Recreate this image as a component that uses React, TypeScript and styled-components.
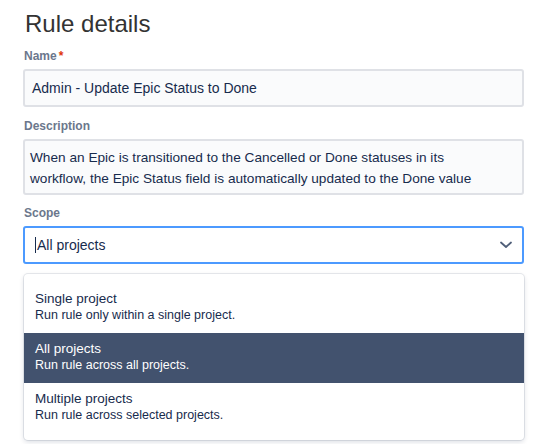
import React from "react";
import styled, { createGlobalStyle } from "styled-components";

const GlobalStyle = createGlobalStyle`
  html, body { margin: 0; padding: 0; background: #ffffff; }
  body { font-family: "Liberation Sans", Arial, Helvetica, sans-serif; }
  * { box-sizing: border-box; }
`;

const Page = styled.div`
  width: 537px;
  height: 444px;
  overflow: hidden;
  padding: 10px 13px 0 23px;
  display: flex;
  flex-direction: column;
`;

const Title = styled.h1`
  margin: 0;
  font-size: 24px;
  line-height: 28px;
  font-weight: 400;
  color: #333333;
  padding-left: 2px;
`;

const Field = styled.div<{ $top: number }>`
  display: flex;
  flex-direction: column;
  margin-top: ${(p) => p.$top}px;
`;

const Label = styled.label`
  font-size: 12px;
  line-height: 16px;
  font-weight: 700;
  color: #6b778c;
  margin-bottom: 5px;
  padding-left: 1px;
`;

const Required = styled.span`
  color: #de350b;
  margin-left: 2px;
`;

const TextBox = styled.div`
  border: 2px solid #dfe1e6;
  background: #fafbfc;
  border-radius: 3px;
  font-size: 14px;
  color: #172b4d;
`;

const SingleLine = styled(TextBox)`
  height: 38px;
  display: flex;
  align-items: center;
  padding: 0 7px;
`;

const MultiLine = styled(TextBox)`
  height: 56px;
  padding: 6px 6px 0 5px;
  font-size: 13.65px;
  line-height: 21px;
`;

const Select = styled.div`
  height: 38px;
  border: 2px solid #4c9aff;
  background: #ffffff;
  border-radius: 3px;
  display: flex;
  align-items: center;
  padding: 0 9px 0 10px;
  font-size: 14px;
  color: #172b4d;
`;

const Caret = styled.span`
  width: 1px;
  height: 16px;
  background: #172b4d;
  margin-right: 1px;
`;

const SelectValue = styled.span`
  flex: 1;
`;

const Menu = styled.div`
  margin-top: 10px;
  margin-left: 1px;
  height: 166px;
  border-radius: 4px;
  background: #ffffff;
  box-shadow: 0 0 0 1px rgba(9, 30, 66, 0.09), 0 2px 5px rgba(9, 30, 66, 0.15);
  padding: 9px 0 7px;
  display: flex;
  flex-direction: column;
`;

const Option = styled.div<{ $selected?: boolean }>`
  height: 50px;
  padding: 6px 11px 0;
  background: ${(p) => (p.$selected ? "#42526e" : "transparent")};
  color: ${(p) => (p.$selected ? "#ffffff" : "#172b4d")};
  display: flex;
  flex-direction: column;
`;

const OptionTitle = styled.div`
  font-size: 13.5px;
  line-height: 19px;
`;

const OptionDesc = styled.div`
  font-size: 12.5px;
  line-height: 15px;
`;

const Chevron = () => (
  <svg width="14" height="10" viewBox="0 0 14 10" aria-hidden="true">
    <polyline
      points="2,2.5 7,7 12,2.5"
      fill="none"
      stroke="#505f79"
      strokeWidth="1.8"
      strokeLinecap="round"
      strokeLinejoin="round"
    />
  </svg>
);

const options = [
  { title: "Single project", desc: "Run rule only within a single project." },
  { title: "All projects", desc: "Run rule across all projects.", selected: true },
  { title: "Multiple projects", desc: "Run rule across selected projects." },
];

export default function App() {
  return (
    <>
      <GlobalStyle />
      <Page>
        <Title>Rule details</Title>
        <Field $top={10}>
          <Label>
            Name<Required>*</Required>
          </Label>
          <SingleLine>Admin - Update Epic Status to Done</SingleLine>
        </Field>
        <Field $top={11}>
          <Label>Description</Label>
          <MultiLine>
            When an Epic is transitioned to the Cancelled or Done statuses in its
            <br />
            workflow, the Epic Status field is automatically updated to the Done value
          </MultiLine>
        </Field>
        <Field $top={10}>
          <Label>Scope</Label>
          <Select>
            <Caret />
            <SelectValue>All projects</SelectValue>
            <Chevron />
          </Select>
        </Field>
        <Menu>
          {options.map((o) => (
            <Option key={o.title} $selected={o.selected}>
              <OptionTitle>{o.title}</OptionTitle>
              <OptionDesc>{o.desc}</OptionDesc>
            </Option>
          ))}
        </Menu>
      </Page>
    </>
  );
}
